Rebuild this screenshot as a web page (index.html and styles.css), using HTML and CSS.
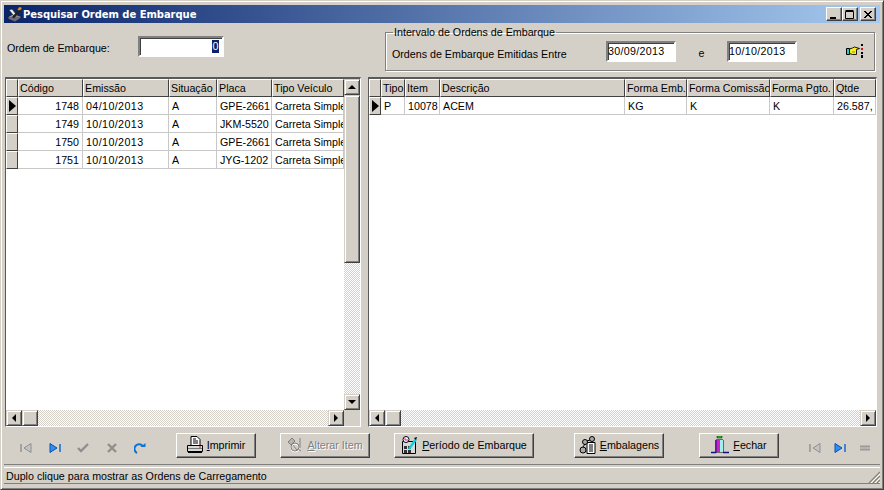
FILE: index.html
```html
<!DOCTYPE html>
<html lang="pt">
<head>
<meta charset="utf-8">
<title>Pesquisar Ordem de Embarque</title>
<link rel="stylesheet" href="styles.css">
</head>
<body>
<div class="window">
  <div class="titlebar">
    <svg class="title-icon" width="17" height="16" viewBox="0 0 17 16"><path d="M2 10.500l6-3 7 3-6 4z" fill="#9a9ab4" stroke="#1a1a2a"/><path d="M2 11v2l7 3 6-4v-1.500" fill="#6a6a80" stroke="#1a1a2a" stroke-width=".7"/><path d="M3 4l3-1 4 5-2 2z" fill="#f0f0f0" stroke="#222" stroke-width=".7"/><path d="M6 11l7-8 2 1.500-7 8z" fill="#222"/><path d="M11 4l2-3h2l1 1-1 2-2 .500z" fill="#d89a30" stroke="#222" stroke-width=".5"/></svg>
    <span class="title-text">Pesquisar Ordem de Embarque</span>
    <div class="caption-buttons">
      <button class="cap"><svg width="10" height="9" viewBox="0 0 10 9"><path d="M1 7h6v2H1z" fill="#000"/></svg></button>
      <button class="cap"><svg width="10" height="9" viewBox="0 0 10 9"><path d="M.5 1.500h8v7h-8z M.5.500h8" fill="none" stroke="#000"/></svg></button>
      <button class="cap cap-close"><svg width="10" height="9" viewBox="0 0 10 9"><path d="M1 1l7 7M2 1l7 7M8 1L1 8M9 1L2 8" stroke="#000"/></svg></button>
    </div>
  </div>

  <div class="filter">
    <label class="order-label">Ordem de Embarque:</label>
    <div class="field order-field"><span class="selected">0</span></div>
    <fieldset class="group">
      <legend>Intervalo de Ordens de Embarque</legend>
      <span class="range-label">Ordens de Embarque Emitidas Entre</span>
      <div class="field date-field">30/09/2013</div>
      <span class="range-e">e</span>
      <div class="field date-field">10/10/2013</div>
      <svg class="hand" width="17" height="14" viewBox="0 0 17 14"><path d="M.5 4.500h3v6h-3z" fill="#20d0d0" stroke="#000"/><path d="M3.500 5l3-1 2-1 5 1.500-3 1v5h-4l-3-1z" fill="#f8f020" stroke="#000" stroke-width=".9"/><path d="M6 8h3" stroke="#a09000"/><path d="M15 0h2v2h-2zM15 8h2v2h-2zM15 11h2v3h-2z" fill="#000"/><path d="M15 4h2v2h-2z" fill="#e01010"/></svg>
    </fieldset>
  </div>

  <div class="grids">
    <div class="grid grid-left">
      <div class="grid-body">
        <div class="row head cols-left">
          <div class="ind"></div><div class="hc">Código</div><div class="hc">Emissão</div><div class="hc">Situação</div><div class="hc">Placa</div><div class="hc">Tipo Veículo</div>
        </div>
        <div class="row cols-left"><div class="ind current"></div><div class="c num">1748</div><div class="c d">04/10/2013</div><div class="c">A</div><div class="c">GPE-2661</div><div class="c">Carreta Simples</div></div>
        <div class="row cols-left"><div class="ind"></div><div class="c num">1749</div><div class="c d">10/10/2013</div><div class="c">A</div><div class="c">JKM-5520</div><div class="c">Carreta Simples</div></div>
        <div class="row cols-left"><div class="ind"></div><div class="c num">1750</div><div class="c d">10/10/2013</div><div class="c">A</div><div class="c">GPE-2661</div><div class="c">Carreta Simples</div></div>
        <div class="row cols-left"><div class="ind"></div><div class="c num">1751</div><div class="c d">10/10/2013</div><div class="c">A</div><div class="c">JYG-1202</div><div class="c">Carreta Simples</div></div>
      </div>
      <div class="vscroll">
        <div class="sb-btn"><i class="arrow up"></i></div>
        <div class="sb-thumb-v"></div>
        <div class="sb-track"></div>
        <div class="sb-btn"><i class="arrow down"></i></div>
      </div>
      <div class="hscroll">
        <div class="sb-btn"><i class="arrow left"></i></div>
        <div class="sb-btn"></div>
        <div class="sb-track"></div>
        <div class="sb-btn"><i class="arrow right"></i></div>
      </div>
      <div class="corner"></div>
    </div>

    <div class="grid grid-right">
      <div class="grid-body">
        <div class="row head cols-right">
          <div class="ind"></div><div class="hc">Tipo</div><div class="hc">Item</div><div class="hc">Descrição</div><div class="hc">Forma Emb.</div><div class="hc">Forma Comissão</div><div class="hc">Forma Pgto.</div><div class="hc">Qtde</div>
        </div>
        <div class="row cols-right"><div class="ind current"></div><div class="c">P</div><div class="c num">10078</div><div class="c">ACEM</div><div class="c">KG</div><div class="c">K</div><div class="c">K</div><div class="c num clip">26.587,</div></div>
      </div>
      <div class="hscroll">
        <div class="sb-btn"><i class="arrow left"></i></div>
        <div class="sb-btn"></div>
        <div class="sb-track"></div>
        <div class="sb-btn"><i class="arrow right"></i></div>
      </div>
    </div>
  </div>

  <div class="toolbar">
    <div class="nav nav-left">
      <svg class="nv" width="12" height="12" viewBox="0 0 12 12"><path d="M1 2v8" stroke="#8f8f8f" stroke-width="1.400"/><path d="M11 1.500v9L4 6z" fill="#c4c4c4" stroke="#8f8f8f"/></svg>
      <svg class="nv" width="12" height="12" viewBox="0 0 12 12"><path d="M11 2v8" stroke="#0a62d0" stroke-width="1.400"/><path d="M1 1.500v9L8 6z" fill="#2f8ef0" stroke="#0a50b0"/></svg>
      <svg class="nv" width="12" height="12" viewBox="0 0 12 12"><path d="M1 6l3 3 7-7" fill="none" stroke="#8f8f8f" stroke-width="2.400"/></svg>
      <svg class="nv" width="12" height="12" viewBox="0 0 12 12"><path d="M2 2l8 8M10 2l-8 8" stroke="#8f8f8f" stroke-width="2.400"/></svg>
      <svg class="nv" width="12" height="12" viewBox="0 0 12 12"><path d="M3 11A4.600 4.600 0 1 1 9 4.500" fill="none" stroke="#0a74d8" stroke-width="2"/><path d="M6.500 5h5V1z" fill="#0a74d8"/></svg>
    </div>
    <button class="btn btn-print">
      <svg width="16" height="18" viewBox="0 0 16 18"><path d="M4 .500h6l3 3v6H4z" fill="#fff" stroke="#000"/><path d="M6 3h3M6 5h5M6 7h5" stroke="#000"/><path d="M.5 9.500h15v6H.5z" fill="#d8d8d8" stroke="#000"/><path d="M1 12.500h14" stroke="#777"/><path d="M12 11h2" stroke="#e01010"/><path d="M1 16.500h14" stroke="#000"/></svg>
      <span><u>I</u>mprimir</span>
    </button>
    <button class="btn btn-edit" disabled>
      <svg width="16" height="18" viewBox="0 0 16 18"><path d="M1 6l4-4 3 3-4 4z" fill="#b8b4ac" stroke="#808080"/><path d="M5 8l5 6 1-1 3 2M13 2v10" fill="none" stroke="#808080"/><circle cx="8" cy="12" r="4" fill="none" stroke="#fff"/><circle cx="8" cy="11" r="4" fill="none" stroke="#808080"/></svg>
      <span class="dis"><u>A</u>lterar Item</span>
    </button>
    <button class="btn btn-period">
      <svg width="17" height="18" viewBox="0 0 17 18"><path d="M1.500 5.500h13v12h-13z" fill="#d8d8d8" stroke="#000"/><path d="M3 10h3v3H3zM7 10h3v3H7zM3 14h3v3H3zM7 14h3v3H7z" fill="#333"/><circle cx="5" cy="3.500" r="3" fill="#fff" stroke="#000"/><path d="M4 2v2h3" fill="none" stroke="#e010c0"/><path d="M8 13L15 3" stroke="#10d0e0" stroke-width="2.400"/><path d="M16 1l-3 1 2 2z" fill="#000"/></svg>
      <span><u>P</u>eríodo de Embarque</span>
    </button>
    <button class="btn btn-pack">
      <svg width="17" height="18" viewBox="0 0 17 18"><path d="M8 6.500h8v11H8z" fill="#fff" stroke="#000"/><path d="M10 9h4M10 11h4M10 13h4M10 15h4" stroke="#000"/><circle cx="4" cy="14" r="3" fill="#aaa" stroke="#000"/><circle cx="6" cy="6" r="2.500" fill="#aaa" stroke="#000"/><circle cx="13" cy="3" r="2.500" fill="#aaa" stroke="#000"/><path d="M4 11l2-3M8 5l3-1" stroke="#000"/></svg>
      <span><u>E</u>mbalagens</span>
    </button>
    <button class="btn btn-close">
      <svg width="18" height="18" viewBox="0 0 18 18"><path d="M6 0h5v2H6z" fill="#10e010" stroke="#000" stroke-width=".5"/><path d="M5 4h7v12H5z" fill="#fff" stroke="#000"/><path d="M5 4h4v12H5z" fill="#d020c0"/><path d="M9 4h3v12H9z" fill="#a0f0f0"/><path d="M0 16.500h5M12 16.500h6" stroke="#10108a" stroke-width="1.400"/><path d="M5 4v13" stroke="#10108a"/></svg>
      <span><u>F</u>echar</span>
    </button>
    <div class="nav nav-right">
      <svg class="nv" width="12" height="12" viewBox="0 0 12 12"><path d="M1 2v8" stroke="#8f8f8f" stroke-width="1.400"/><path d="M11 1.500v9L4 6z" fill="#c4c4c4" stroke="#8f8f8f"/></svg>
      <svg class="nv" width="12" height="12" viewBox="0 0 12 12"><path d="M11 2v8" stroke="#0a62d0" stroke-width="1.400"/><path d="M1 1.500v9L8 6z" fill="#2f8ef0" stroke="#0a50b0"/></svg>
      <svg class="nv" width="12" height="12" viewBox="0 0 12 12"><path d="M1 4.500h10M1 7.500h10" stroke="#9a9a9a" stroke-width="2"/></svg>
    </div>
  </div>

  <div class="status">
    <span class="status-text">Duplo clique para mostrar as Ordens de Carregamento</span>
    <svg class="grip" width="12" height="12" viewBox="0 0 12 12"><path d="M12 1L1 12M12 5L5 12M12 9L9 12" stroke="#808080" stroke-width="1.200"/><path d="M12 3L3 12M12 7L7 12M12 11L11 12" stroke="#fff"/></svg>
  </div>
</div>
</body>
</html>
```
FILE: styles.css
```css
* { box-sizing: border-box; }
html, body { margin: 0; padding: 0; }
body { width: 884px; height: 490px; overflow: hidden; background: #d4d0c8; font: 10.7px "Liberation Sans", Arial, sans-serif; color: #000; }
button { font: inherit; color: inherit; padding: 0; margin: 0; }

.window {
  width: 884px; height: 490px; display: flex; flex-direction: column;
  background: #d4d0c8; padding: 1px 3px 2px 3px;
  border: 1px solid #404040; border-top-color: #d4d0c8; border-left-color: #d4d0c8;
  box-shadow: inset 1px 1px 0 #fff, inset -1px -1px 0 #808080;
}
.titlebar {
  height: 18px; margin-top: 3px; flex: none; display: flex; align-items: center; padding: 0 4px 0 2px;
  background: linear-gradient(90deg, #0a246a, #a6caf0); color: #fff;
}
.title-icon { flex: none; }
.title-text { font: bold 10px "DejaVu Sans", sans-serif; letter-spacing: -0.05px; }
.caption-buttons { margin-left: auto; display: flex; }
.cap { width: 16px; height: 14px; background: #d4d0c8; border: 1px solid; border-color: #fff #404040 #404040 #fff; box-shadow: inset -1px -1px 0 #808080; display: flex; align-items: center; justify-content: center; }
.cap-close { margin-left: 2px; }

.filter { height: 53px; flex: none; display: flex; align-items: flex-start; padding: 0 5px 0 3px; }
.order-label { margin-top: 19px; width: 131px; }
.field { height: 21px; background: #fff; border: 2px solid; border-color: #808080 #fff #fff #808080; box-shadow: inset 1px 1px 0 #404040; display: flex; align-items: center; }
.order-field { width: 86px; margin-top: 13px; justify-content: flex-end; padding-right: 3px; }
.selected { background: #0a246a; color: #fff; width: 7px; text-align: center; line-height: 13px; }
.group {
  margin: 3px 0 0 auto; width: 490px; height: 45px; padding: 0 0 0 6px; min-inline-size: 0;
  border: 1px solid #808080; box-shadow: 1px 1px 0 #fff, inset 1px 1px 0 #fff;
  display: flex; align-items: center;
}
.group legend { padding: 0 1px; margin-left: 1px; line-height: 12px; }
.range-label { width: 214px; }
.date-field { width: 70px; padding-left: 0; margin-top: -6px; letter-spacing: .3px; }
.range-e { width: 51px; text-align: center; margin-top: -2px; }
.hand { margin: -6px 0 0 49px; }

.grids { flex: 1; display: flex; gap: 7px; padding: 1px 0 0 1px; min-height: 0; }
.grid { display: grid; border: 1px solid #fff; border-top: 2px solid #5a5a5a; border-left-color: #5a5a5a; background: #fff; min-height: 0; }
.grid-left { width: 356px; grid-template-columns: 338px 16px; grid-template-rows: minmax(0, 1fr) 16px; }
.grid-right { width: 509px; grid-template-columns: 507px; grid-template-rows: minmax(0, 1fr) 16px; }
.grid-body { overflow: hidden; min-width: 0; min-height: 0; background: #fff; }

.row { display: grid; height: 18px; }
.cols-left { grid-template-columns: 12px 65px 86px 48px 55px 72px; }
.cols-right { grid-template-columns: 12px 24px 35px 185px 62px 83px 64px 42px; }
.head { background: #d4d0c8; }
.hc { padding-left: 1px; line-height: 16px; border: 1px solid; border-color: #fff #404040 #404040 #fff; white-space: nowrap; overflow: hidden; }
.ind { background: #d4d0c8; border: 1px solid; border-color: #fff #404040 #404040 #fff; display: flex; align-items: center; }
.current::before { content: ""; margin-left: 2px; border-left: 7px solid #000; border-top: 6px solid transparent; border-bottom: 6px solid transparent; }
.c { padding: 0 3px 0 3px; line-height: 18px; border-right: 1px solid #c8c8c8; border-bottom: 1px solid #c8c8c8; white-space: nowrap; overflow: hidden; }
.d { letter-spacing: .4px; }
.num { text-align: right; }
.clip { text-align: left; padding-left: 3px; }

.vscroll { display: flex; flex-direction: column; min-height: 0; }
.hscroll { display: flex; min-width: 0; }
.sb-btn { flex: none; width: 16px; height: 16px; background: #d4d0c8; border: 1px solid; border-color: #d4d0c8 #404040 #404040 #d4d0c8; box-shadow: inset 1px 1px 0 #fff, inset -1px -1px 0 #808080; display: flex; align-items: center; justify-content: center; }
.sb-thumb-v { flex: none; height: 168px; width: 16px; background: #d4d0c8; border: 1px solid; border-color: #d4d0c8 #404040 #404040 #d4d0c8; box-shadow: inset 1px 1px 0 #fff, inset -1px -1px 0 #808080; }
.sb-track { flex: 1; background-color: #d4d0c8; background-image: conic-gradient(#fff 25%, #d4d0c8 0 50%, #fff 0 75%, #d4d0c8 0); background-size: 2px 2px; }
.corner { background: #d4d0c8; }
.arrow { display: block; width: 0; height: 0; border: 4px solid transparent; }
.arrow.up { border-top: 0; border-bottom-color: #000; }
.arrow.down { border-bottom: 0; border-top-color: #000; }
.arrow.left { border-left: 0; border-right-color: #000; }
.arrow.right { border-right: 0; border-left-color: #000; }

.toolbar { height: 38px; flex: none; display: flex; align-items: center; padding: 0 0 1px 0; border-bottom: 1px solid #808080; }
.nav { display: flex; align-items: center; flex: none; margin-top: 5px; }
.nav-left { gap: 16.500px; margin-left: 16px; width: 156px; }
.nav-right { gap: 13px; margin-left: 30px; }
.btn { height: 25px; display: flex; align-items: center; justify-content: center; gap: 4px; background: #d4d0c8; border: 1px solid; border-color: #fff #404040 #404040 #fff; box-shadow: inset -1px -1px 0 #808080; flex: none; }
.btn-print { width: 80px; }
.btn-edit { width: 90px; margin-left: 24px; }
.btn-period { width: 140px; margin-left: 24px; }
.btn-pack { width: 90px; margin-left: 40px; }
.btn-close { width: 80px; margin-left: 35px; }
.dis { color: #808080; text-shadow: 1px 1px 0 #fff; }

.status { height: 17px; flex: none; margin: 2px 0 3px; display: flex; align-items: center; justify-content: space-between; padding-left: 2px; border-top: 1px solid #fff; border-bottom: 1px solid #808080; }
.grip { align-self: flex-end; }
```
